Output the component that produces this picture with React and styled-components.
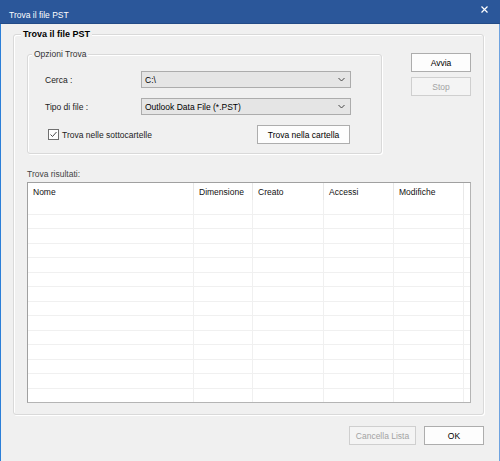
import React from 'react';
import styled, { createGlobalStyle } from 'styled-components';

const GlobalStyle = createGlobalStyle`
  html, body {
    margin: 0;
    padding: 0;
    background: #f0f0f0;
  }
  body {
    font-family: "Liberation Sans", Arial, sans-serif;
    font-size: 8.5px;
    color: #000;
  }
`;

const Window = styled.div`
  width: 500px;
  height: 461px;
  box-sizing: border-box;
  display: flex;
  flex-direction: column;
  background: #f0f0f0;
  overflow: hidden;
`;

const TitleBar = styled.div`
  height: 23px;
  flex: none;
  display: flex;
  align-items: flex-start;
  justify-content: space-between;
  background: #2b579a;
  border-bottom: 1px solid #234b87;
  padding: 0 12px 0 9px;
`;

const TitleText = styled.span`
  color: #fff;
  line-height: 11px;
  margin-top: 10px;
`;

const CloseIcon = styled.svg`
  margin-top: 6px;
  width: 7px;
  height: 7px;
`;

const Body = styled.div`
  flex: 1;
  display: flex;
  flex-direction: column;
  border-left: 1px solid #2b7fd8;
  border-right: 1px solid #6fa3e0;
`;

const Group = styled.div`
  position: relative;
  box-sizing: border-box;
  border: 1px solid #d9d9d9;
  border-radius: 3px;
  box-shadow: inset 1px 1px 0 #fff, 1px 1px 0 #fff;
`;

const Legend = styled.span`
  position: absolute;
  top: -6px;
  left: ${p => p.$left}px;
  padding: 0 2px;
  background: #f0f0f0;
  line-height: 11px;
  font-size: ${p => (p.$bold ? '9px' : '8.5px')};
  font-weight: ${p => (p.$bold ? 'bold' : 'normal')};
  color: ${p => (p.$bold ? '#000' : '#333')};
`;

const OuterGroup = styled(Group)`
  margin: 10px 15px 0 12px;
  height: 381px;
  padding: 19px 12px 0 13px;
  display: flex;
  flex-direction: column;
`;

const TopRow = styled.div`
  display: flex;
  align-items: flex-start;
`;

const OptionsGroup = styled(Group)`
  width: 356px;
  height: 100px;
  padding: 16px 0 0 17px;
`;

const FieldRow = styled.div`
  display: flex;
  align-items: center;
  height: 17px;
  margin-bottom: 10px;
`;

const Label = styled.span`
  width: 96px;
  color: #222;
`;

const Combo = styled.div`
  box-sizing: border-box;
  width: 210px;
  height: 17px;
  display: flex;
  align-items: center;
  justify-content: space-between;
  padding: 0 5px 0 3px;
  background: #e5e5e5;
  border: 1px solid #acacac;
`;

const CheckRow = styled.div`
  display: flex;
  align-items: center;
  justify-content: space-between;
  width: 305px;
  height: 19px;
  margin-top: 1px;
`;

const CheckLabel = styled.label`
  display: flex;
  align-items: center;
  gap: 3px;
  margin-left: 3px;
  color: #222;
`;

const CheckBox = styled.span`
  box-sizing: border-box;
  width: 11px;
  height: 11px;
  border: 1px solid #707070;
  background: #fff;
  display: flex;
  align-items: center;
  justify-content: center;
`;

const Button = styled.button`
  box-sizing: border-box;
  width: ${p => p.$width}px;
  height: 19px;
  padding: 0;
  font-family: inherit;
  font-size: 8.5px;
  background: ${p => (p.disabled ? '#f4f4f4' : '#fdfdfd')};
  color: ${p => (p.disabled ? '#a3a3a3' : '#000')};
  border: 1px solid ${p => (p.disabled ? '#cfcfcf' : '#adadad')};
  border-radius: 0;
`;

const SideButtons = styled.div`
  display: flex;
  flex-direction: column;
  gap: 5px;
  margin: -1px 0 0 29px;
`;

const ResultsLabel = styled.div`
  margin-top: 15px;
  line-height: 11px;
  color: #444;
`;

const ResultsTable = styled.div`
  box-sizing: border-box;
  margin-top: 2px;
  height: 221px;
  border: 1px solid #a0a0a0;
  border-right-color: #b4b4b4;
  border-bottom-color: #b4b4b4;
  background: #fff;
  overflow: hidden;
  display: grid;
  grid-template-columns: 166px 59px 71px 70px 70px 1fr;
  grid-template-rows: 17px;
  grid-auto-rows: 14.5px;
`;

const HeadCell = styled.div`
  box-sizing: border-box;
  padding: 4px 0 0 5px;
  border-right: ${p => (p.$last ? 'none' : '1px solid #e8e8e8')};
  color: #111;
  line-height: 10px;
`;

const Cell = styled.div`
  box-sizing: border-box;
  border-right: ${p => (p.$last ? 'none' : '1px solid #f0f0f0')};
  border-bottom: 1px solid #f0f0f0;
`;

const Footer = styled.div`
  display: flex;
  justify-content: flex-end;
  gap: 8px;
  margin: 11px 15px 0 0;
`;

const columns = ['Nome', 'Dimensione', 'Creato', 'Accessi', 'Modifiche', ''];

const Chevron = () => (
  <svg width="7" height="5" viewBox="0 0 7 5">
    <polyline points="0.5,1 3.5,4 6.5,1" fill="none" stroke="#444" strokeWidth="1" />
  </svg>
);

export default function App() {
  const rows = Array.from({ length: 14 }, (_, i) => i);
  return (
    <Window>
      <GlobalStyle />
      <TitleBar>
        <TitleText>Trova il file PST</TitleText>
        <CloseIcon viewBox="0 0 7 7">
          <path d="M0.5 0.5 L6.5 6.5 M6.5 0.5 L0.5 6.5" stroke="#fff" strokeWidth="1.2" />
        </CloseIcon>
      </TitleBar>
      <Body>
        <OuterGroup>
          <Legend $left={7} $bold>Trova il file PST</Legend>
          <TopRow>
            <OptionsGroup>
              <Legend $left={4}>Opzioni Trova</Legend>
              <FieldRow>
                <Label>Cerca :</Label>
                <Combo>
                  <span>C:\</span>
                  <Chevron />
                </Combo>
              </FieldRow>
              <FieldRow>
                <Label>Tipo di file :</Label>
                <Combo>
                  <span>Outlook Data File (*.PST)</span>
                  <Chevron />
                </Combo>
              </FieldRow>
              <CheckRow>
                <CheckLabel>
                  <CheckBox>
                    <svg width="9" height="9" viewBox="0 0 9 9">
                      <polyline points="1.5,4.5 3.5,6.5 7.5,2" fill="none" stroke="#333" strokeWidth="0.9" />
                    </svg>
                  </CheckBox>
                  Trova nelle sottocartelle
                </CheckLabel>
                <Button $width={93}>Trova nella cartella</Button>
              </CheckRow>
            </OptionsGroup>
            <SideButtons>
              <Button $width={60}>Avvia</Button>
              <Button $width={60} disabled>Stop</Button>
            </SideButtons>
          </TopRow>
          <ResultsLabel>Trova risultati:</ResultsLabel>
          <ResultsTable>
            {columns.map((c, i) => (
              <HeadCell key={'h' + i} $last={i === columns.length - 1}>{c}</HeadCell>
            ))}
            {rows.map(r =>
              columns.map((_, i) => (
                <Cell key={r + '-' + i} $last={i === columns.length - 1} />
              ))
            )}
          </ResultsTable>
        </OuterGroup>
        <Footer>
          <Button $width={67} disabled>Cancella Lista</Button>
          <Button $width={60}>OK</Button>
        </Footer>
      </Body>
    </Window>
  );
}
